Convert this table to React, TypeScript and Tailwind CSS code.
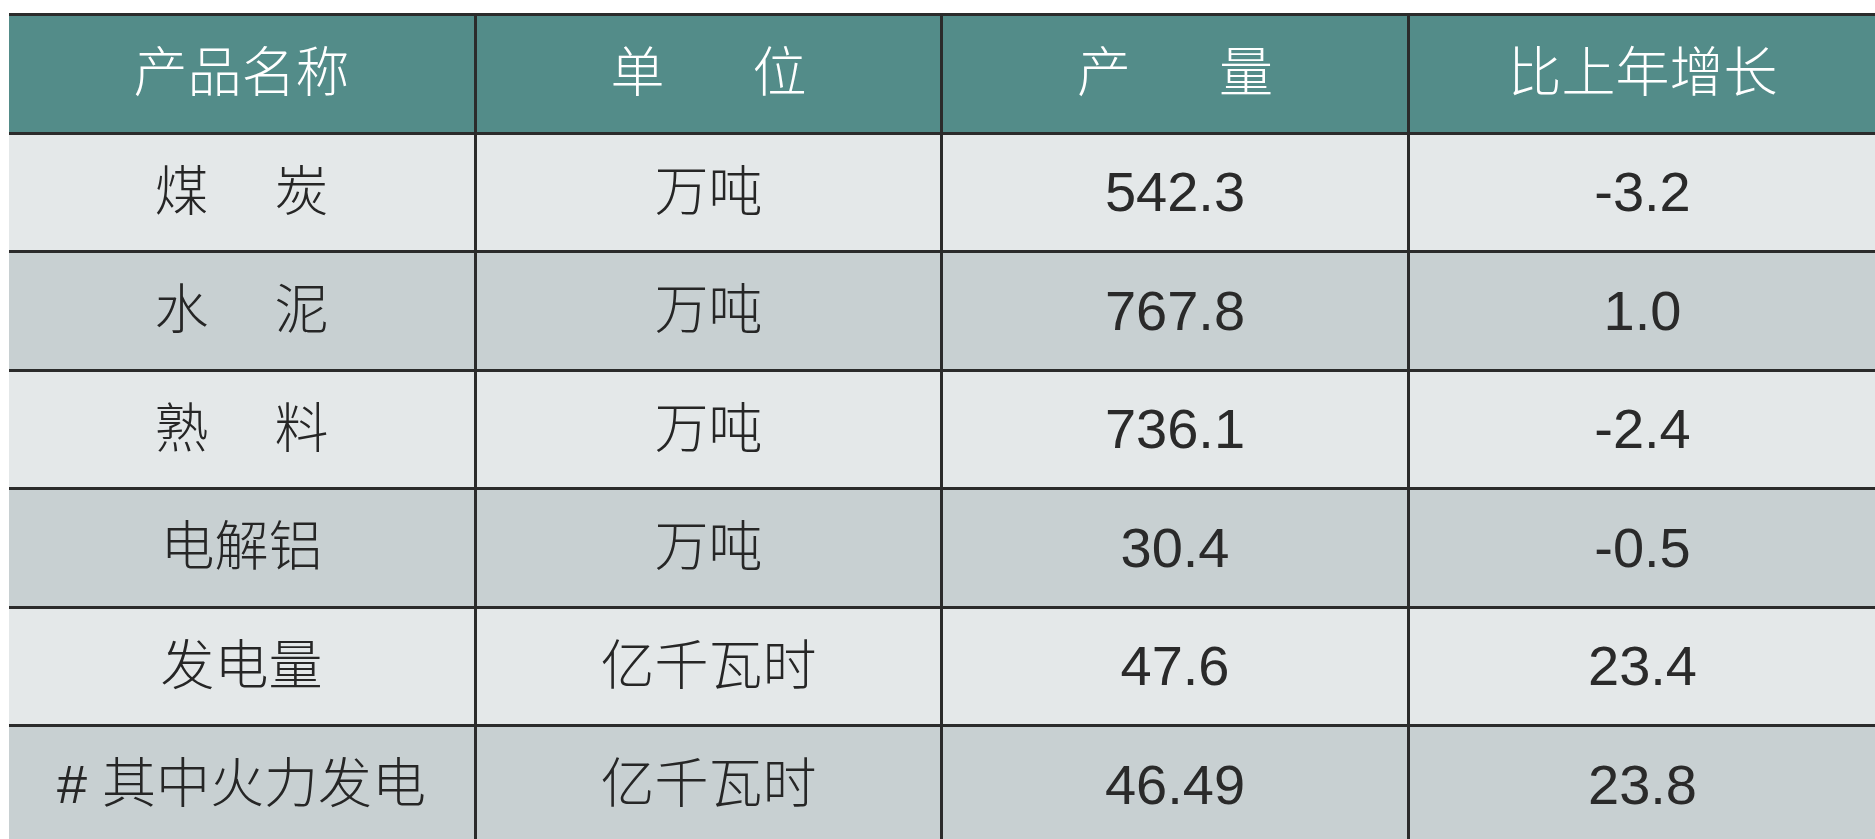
import React from "react";

const rows: { name: string[]; unit: string; output: string; growth: string }[] = [
  { name: ["煤", "炭"], unit: "万吨", output: "542.3", growth: "-3.2" },
  { name: ["水", "泥"], unit: "万吨", output: "767.8", growth: "1.0" },
  { name: ["熟", "料"], unit: "万吨", output: "736.1", growth: "-2.4" },
  { name: ["电解铝"], unit: "万吨", output: "30.4", growth: "-0.5" },
  { name: ["发电量"], unit: "亿千瓦时", output: "47.6", growth: "23.4" },
  { name: ["# 其中火力发电"], unit: "亿千瓦时", output: "46.49", growth: "23.8" },
];

const font = {
  fontFamily: '"Liberation Sans", "Noto Sans CJK SC", sans-serif',
};

function Cell({
  children,
  first,
  className,
}: {
  children: React.ReactNode;
  first?: boolean;
  className?: string;
}) {
  return (
    <div
      className={`flex items-center justify-center ${className ?? ""} ${
        first ? "" : "border-l-[3px] border-[#2b2b2b]"
      }`}
    >
      {children}
    </div>
  );
}

export default function App() {
  return (
    <div className="h-[839px] w-[1875px] overflow-hidden bg-white pt-[13px] pl-[9px] font-light" style={font}>
      <div className="grid h-[118.5px] grid-cols-[465px_466px_467px_1fr] border-t-[3px] border-[#2b2b2b] bg-[#538c89] text-[54px] text-white">
        <Cell first>产品名称</Cell>
        <Cell className="gap-[88px]">
          <span>单</span>
          <span>位</span>
        </Cell>
        <Cell className="gap-[88px]">
          <span>产</span>
          <span>量</span>
        </Cell>
        <Cell>比上年增长</Cell>
      </div>
      {rows.map((r, i) => (
        <div
          key={i}
          className={`grid h-[118.5px] grid-cols-[465px_466px_467px_1fr] border-t-[3px] border-[#2b2b2b] text-[#262626] ${
            i % 2 === 0 ? "bg-[#e4e8e9]" : "bg-[#c8d0d2]"
          }`}
        >
          <Cell first className="gap-[66px] text-[54px]">
            {r.name.map((n, j) => (
              <span key={j} className="whitespace-pre">
                {n}
              </span>
            ))}
          </Cell>
          <Cell className="text-[54px]">{r.unit}</Cell>
          <Cell className="text-[56px] text-[#2a2a2a]">{r.output}</Cell>
          <Cell className="text-[56px] text-[#2a2a2a]">{r.growth}</Cell>
        </div>
      ))}
    </div>
  );
}
